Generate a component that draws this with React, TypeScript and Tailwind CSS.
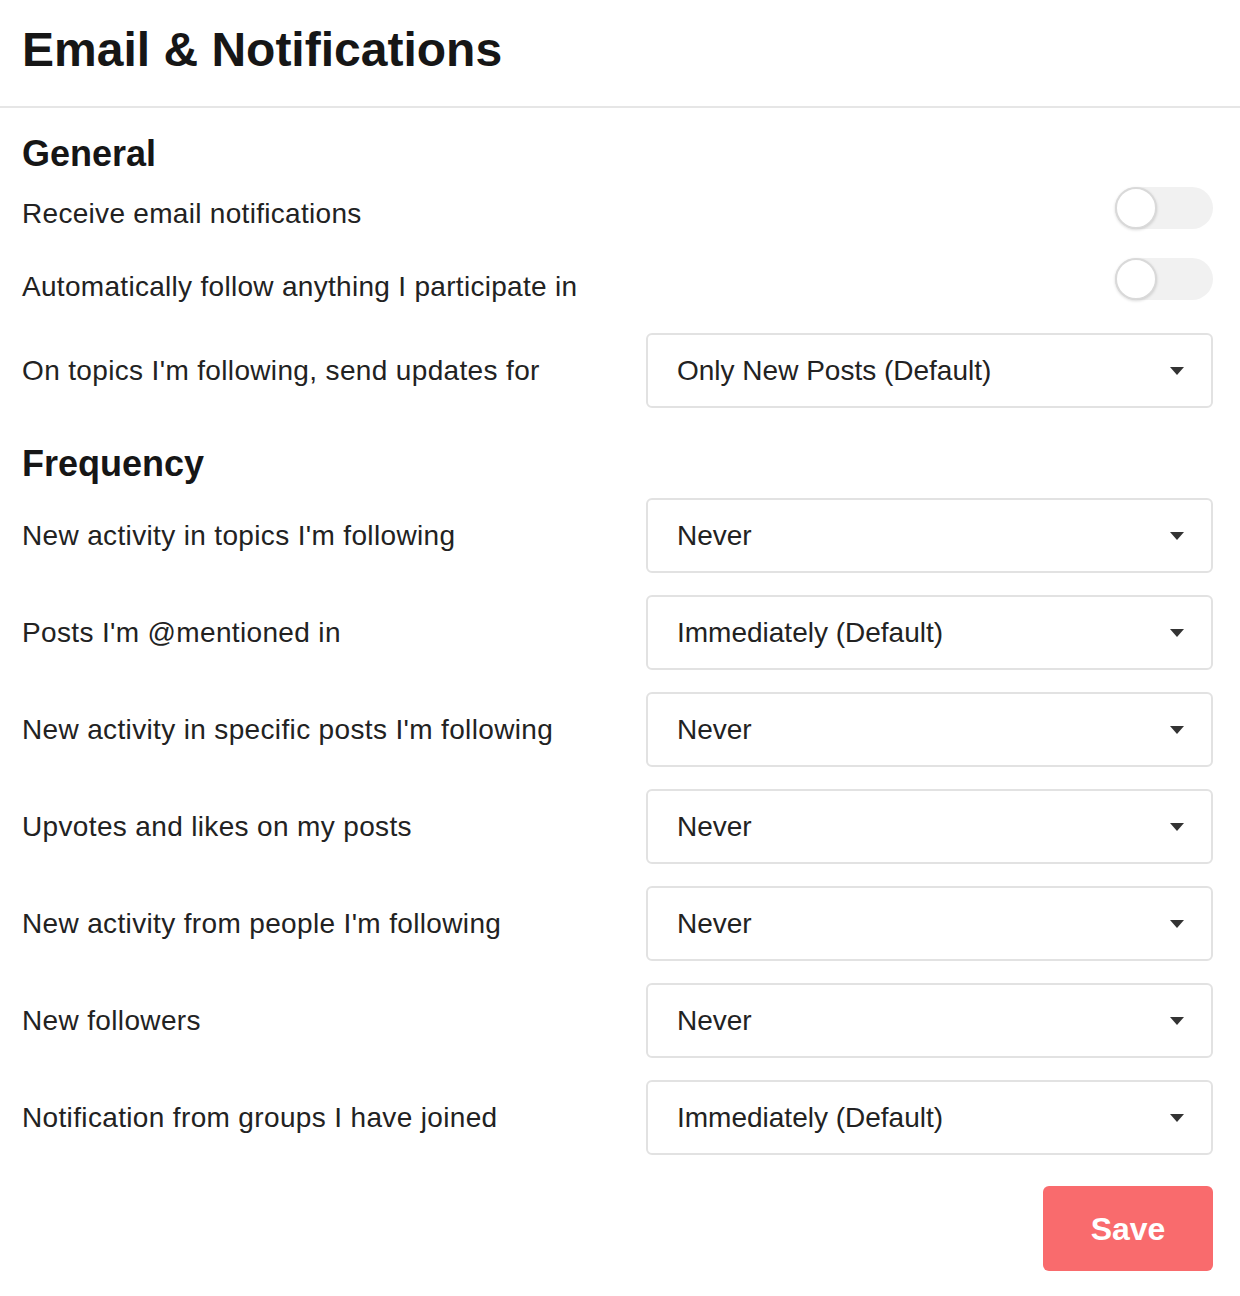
import React from "react";

const font = { fontFamily: '"Liberation Sans", Arial, Helvetica, sans-serif' };

function Toggle() {
  return (
    <div className="relative h-[42px] w-[98px] shrink-0 rounded-full bg-[#f1f1f1]">
      <div className="absolute left-0 top-0 h-[42px] w-[42px] rounded-full border-2 border-[#d9d9d9] bg-white shadow-[0_1px_3px_rgba(0,0,0,0.15)]" />
    </div>
  );
}

function Select({ value }: { value: string }) {
  return (
    <div className="flex h-[75px] w-[567px] shrink-0 items-center justify-between rounded-[6px] border-2 border-[#e2e2e2] bg-white pl-[29px] pr-[27px]">
      <span className="text-[28px] leading-none text-[#222]">{value}</span>
      <svg width="14" height="8" viewBox="0 0 14 8">
        <path d="M0 0 L14 0 L7 8 Z" fill="#333" />
      </svg>
    </div>
  );
}

function SelectRow({ label, value }: { label: string; value: string }) {
  return (
    <div className="flex items-center justify-between">
      <span className="text-[28px] leading-none tracking-[0.35px] text-[#222]">{label}</span>
      <Select value={value} />
    </div>
  );
}

function ToggleRow({ label, mt, lt }: { label: string; mt: string; lt: string }) {
  return (
    <div className={`flex h-[42px] items-start justify-between ${mt}`}>
      <span className={`${lt} text-[28px] leading-none tracking-[0.3px] text-[#222]`}>{label}</span>
      <Toggle />
    </div>
  );
}

export default function App() {
  const freq: [string, string][] = [
    ["New activity in topics I'm following", "Never"],
    ["Posts I'm @mentioned in", "Immediately (Default)"],
    ["New activity in specific posts I'm following", "Never"],
    ["Upvotes and likes on my posts", "Never"],
    ["New activity from people I'm following", "Never"],
    ["New followers", "Never"],
    ["Notification from groups I have joined", "Immediately (Default)"],
  ];
  return (
    <div className="min-h-[1296px] w-[1240px] bg-white" style={font}>
      <div className="h-[108px] border-b-2 border-[#e6e6e6] pl-[22px] pt-[26px]">
        <h1 className="text-[48px] font-bold leading-none text-[#161616]">Email &amp; Notifications</h1>
      </div>
      <div className="flex flex-col pl-[22px] pr-[27px]">
        <h2 className="mt-[28px] text-[36px] font-bold leading-none text-[#161616]">General</h2>
        <ToggleRow label="Receive email notifications" mt="mt-[15px]" lt="mt-[13px]" />
        <ToggleRow label="Automatically follow anything I participate in" mt="mt-[29px]" lt="mt-[15px]" />
        <div className="mt-[33px]">
          <SelectRow label="On topics I'm following, send updates for" value="Only New Posts (Default)" />
        </div>
        <h2 className="mt-[38px] text-[36px] font-bold leading-none text-[#161616]">Frequency</h2>
        <div className="mt-[16px] flex flex-col gap-[22px]">
          {freq.map(([l, v]) => (
            <SelectRow key={l} label={l} value={v} />
          ))}
        </div>
        <div className="mt-[31px] flex justify-end">
          <button className="h-[85px] w-[170px] rounded-[6px] bg-[#f96b6d] text-[32px] font-bold text-white">
            Save
          </button>
        </div>
      </div>
    </div>
  );
}
